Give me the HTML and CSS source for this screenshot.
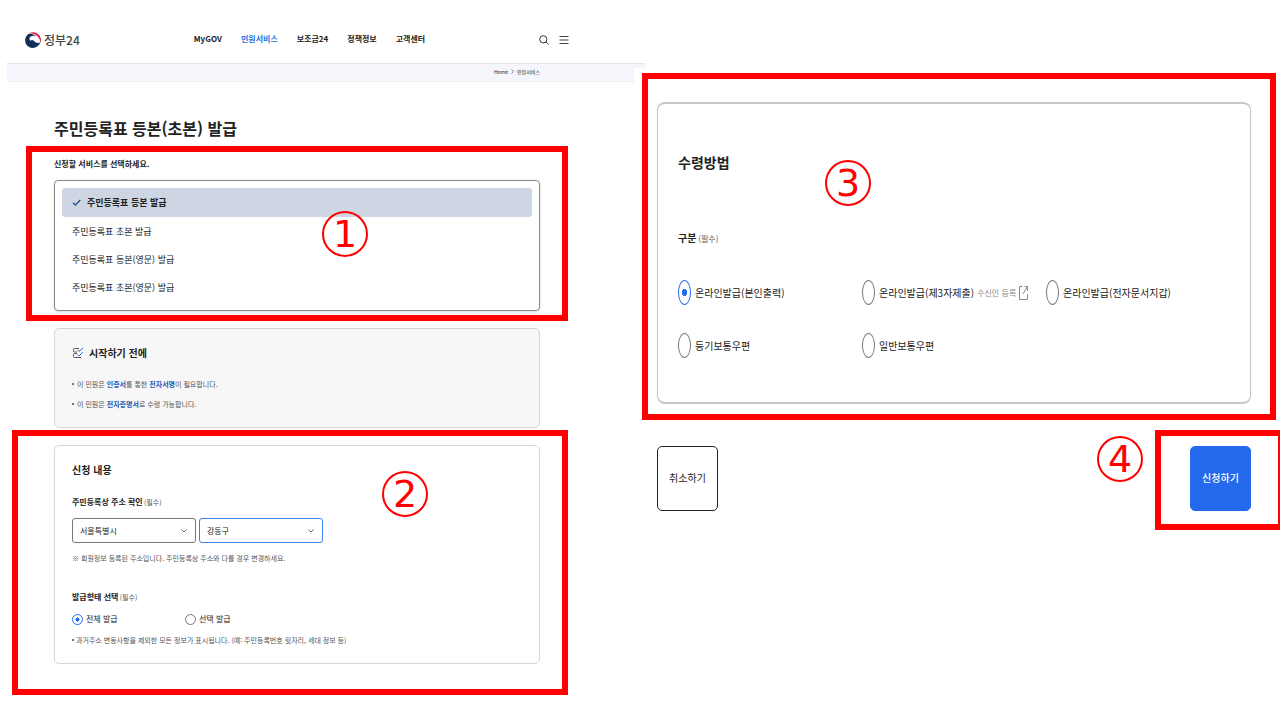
FILE: index.html
```html
<!DOCTYPE html>
<html lang="ko">
<head>
  <meta charset="UTF-8" />
  <meta name="viewport" content="width=device-width, initial-scale=1" />
  <title>정부24 주민등록표 등본(초본) 발급</title>
  <link rel="stylesheet" href="styles.css">
</head>
<body>
  <div class="guide">

    <div class="page">
      <header class="header">
        <a class="logo" href="#">
          <svg width="16" height="16" viewBox="0 0 48 48" aria-hidden="true">
            <path fill="#e5173f" d="M13 3C28-4 48 5 48 25c0 3-1 6-2 8C46 17 35 5 13 3z"/>
            <path fill="#0f2d56" d="M10 6C-4 17-2 38 12 45c13 7 30 0 34-15-5 5-13 4-18-2-4-5-10-5-12-1-5-6-3-13 5-15 5-1 9 0 13 2C28 7 18 4 10 6z"/>
          </svg>
          <span>정부24</span>
        </a>
        <nav class="nav">
          <a href="#">MyGOV</a>
          <a href="#" class="active">민원서비스</a>
          <a href="#">보조금24</a>
          <a href="#">정책정보</a>
          <a href="#">고객센터</a>
        </nav>
        <div class="tools">
          <button type="button" aria-label="검색">
            <svg width="10" height="10" viewBox="0 0 10 10" fill="none" stroke="#333"><circle cx="4.3" cy="4.3" r="3.6"/><path d="M7 7l2.5 2.5"/></svg>
          </button>
          <button type="button" aria-label="메뉴">
            <svg width="10" height="10" viewBox="0 0 10 10" fill="none" stroke="#444"><path d="M.5 1.500h9M.5 5h9M.5 8.500h9"/></svg>
          </button>
        </div>
      </header>

      <div class="breadcrumb">
        <a href="#">Home</a>
        <svg width="3" height="5" viewBox="0 0 3 5" fill="none" stroke="#555" stroke-width=".7"><path d="M.5.5l2 2-2 2"/></svg>
        <a href="#">민원서비스</a>
      </div>

      <main class="content">
        <h1>주민등록표 등본(초본) 발급</h1>

        <section class="service">
          <h2 class="label">신청할 서비스를 선택하세요.</h2>
          <ul class="service-list">
            <li><button type="button" class="selected">
              <svg width="9" height="9" viewBox="0 0 9 9" fill="none" stroke="#1d4a8f" stroke-width="1.3"><path d="M1 4.8l2.4 2.3L8.2 2"/></svg>
              주민등록표 등본 발급</button></li>
            <li><button type="button">주민등록표 초본 발급</button></li>
            <li><button type="button">주민등록표 등본(영문) 발급</button></li>
            <li><button type="button">주민등록표 초본(영문) 발급</button></li>
          </ul>
          <div class="frame frame-1"></div>
          <span class="step step-1">1</span>
        </section>

        <section class="card notice">
          <h2>
            <svg width="12" height="12" viewBox="0 0 12 12" fill="none" stroke="#555">
              <path d="M7 1.500H2.500a1 1 0 0 0-1 1v1.500a1 1 0 0 0 1 1H5M5 6.500H2.500a1 1 0 0 0-1 1v2a1 1 0 0 0 1 1H9"/>
              <path stroke="#2f6bd8" d="M5.500 3l1.500 1.500L11 1M5.500 7.500L7 9l4-4"/>
            </svg>
            시작하기 전에
          </h2>
          <ul>
            <li>이 민원은 <b>인증서</b>를 통한 <b>전자서명</b>이 필요합니다.</li>
            <li>이 민원은 <b>전자증명서</b>로 수령 가능합니다.</li>
          </ul>
        </section>

        <section class="apply">
          <form class="card">
            <h2>신청 내용</h2>
            <h3 class="label">주민등록상 주소 확인 <small>(필수)</small></h3>
            <div class="selects">
              <div class="select">
                <select aria-label="시도"><option>서울특별시</option></select>
                <svg width="6" height="4" viewBox="0 0 6 4" fill="none" stroke="#666"><path d="M.5.5L3 3 5.500.5"/></svg>
              </div>
              <div class="select focus">
                <select aria-label="시군구"><option>강동구</option></select>
                <svg width="6" height="4" viewBox="0 0 6 4" fill="none" stroke="#666"><path d="M.5.5L3 3 5.500.5"/></svg>
              </div>
            </div>
            <p class="note">※ 회원정보 등록된 주소입니다. 주민등록상 주소와 다를 경우 변경하세요.</p>
            <h3 class="label type">발급형태 선택 <small>(필수)</small></h3>
            <div class="radios">
              <label><input type="radio" name="type" checked>전체 발급</label>
              <label><input type="radio" name="type">선택 발급</label>
            </div>
            <p class="note dot">과거주소 변동사항을 제외한 모든 정보가 표시됩니다. (예: 주민등록번호 뒷자리, 세대 정보 등)</p>
          </form>
          <div class="frame frame-2"></div>
          <span class="step step-2">2</span>
        </section>
      </main>
    </div>

    <div class="receive">
      <section class="method">
        <form class="method-card">
          <h2>수령방법</h2>
          <h3>구분 <small>(필수)</small></h3>
          <div class="method-options">
            <label><input type="radio" name="method" checked>온라인발급(본인출력)</label>
            <div class="option">
              <label><input type="radio" name="method">온라인발급(제3자제출)</label>
              <a href="#">수신인 등록
                <svg width="9" height="16" viewBox="0 0 9 16" fill="none" stroke="#888"><path d="M3.500 1.500H.5v13h8V9M5.500 1.500h3V6M8.500 1.500L4 9"/></svg>
              </a>
            </div>
            <label><input type="radio" name="method">온라인발급(전자문서지갑)</label>
            <label><input type="radio" name="method">등기보통우편</label>
            <label><input type="radio" name="method">일반보통우편</label>
          </div>
        </form>
        <div class="frame frame-3"></div>
        <span class="step step-3">3</span>
      </section>

      <div class="actions">
        <button type="button" class="cancel">취소하기</button>
        <div class="submit-area">
          <button type="button" class="submit">신청하기</button>
          <div class="frame frame-4"></div>
          <span class="step step-4">4</span>
        </div>
      </div>
    </div>

  </div>
</body>
</html>
```

FILE: styles.css
```css
* {
  box-sizing: border-box;
}
body {
  margin: 0;
  background: #fff;
  color: #222;
  font-family: "Noto Sans CJK KR", sans-serif;
  font-size: 8px;
  line-height: 12px;
  overflow-x: hidden;
}
h1, h2, h3, p, ul {
  margin: 0;
  padding: 0;
}
ul {
  list-style: none;
}
a {
  color: inherit;
  text-decoration: none;
}
button, select {
  font-family: inherit;
  color: inherit;
}
svg {
  display: block;
  flex: none;
}
.guide {
  display: grid;
  grid-template-columns: 645fr 635fr;
  align-items: start;
}

/* left: application page */
.page {
  padding-left: 7px;
}
.header {
  display: flex;
  align-items: center;
  padding: 16px 76px 0 18px;
  height: 64px;
  border-bottom: 1px solid #e1e4ec;
}
.logo {
  display: flex;
  align-items: center;
  gap: 3px;
  font-size: 12px;
  line-height: 16px;
  font-weight: 500;
  color: #444;
}
.nav {
  display: flex;
  gap: 19px;
  margin-left: 114px;
  padding-bottom: 2px;
  font-weight: 700;
}
.nav .active {
  color: #1a76e8;
}
.tools {
  display: flex;
  gap: 10px;
  margin-left: auto;
}
.tools button {
  padding: 0;
  border: 0;
  background: none;
}
.breadcrumb {
  display: flex;
  align-items: center;
  justify-content: flex-end;
  gap: 3px;
  height: 18px;
  padding: 0 105px 2px 0;
  background: #f5f6fb;
  border-bottom: 1px solid #eeeff2;
  font-size: 5px;
}
.content {
  padding: 34px 105px 49px 47px;
}
h1 {
  font-size: 16px;
  line-height: 24px;
  margin-bottom: 18px;
}
.label {
  font-size: 8px;
  line-height: 12px;
}
.service, .apply, .method, .submit-area {
  position: relative;
}
.service-list {
  margin-top: 10px;
  padding: 7px 7px 9px;
  border: 1px solid #888;
  border-radius: 4px;
  box-shadow: 0 1px 3px rgba(0, 0, 0, 0.15);
}
.service-list button {
  display: flex;
  align-items: center;
  gap: 6px;
  width: 100%;
  height: 28px;
  padding: 0 10px;
  border: 0;
  border-radius: 3px;
  background: none;
  font-size: 9px;
}
.service-list .selected {
  height: 29px;
  background: #cdd6e2;
  font-weight: 700;
}
.card {
  padding: 16px 17px 17px;
  border: 1px solid #d6d6d6;
  border-radius: 5px;
}
.card h2 {
  display: flex;
  align-items: center;
  gap: 5px;
  font-size: 10px;
  line-height: 16px;
}
.notice {
  margin: 17px 0;
  background: #f7f7f7;
}
.notice ul {
  display: grid;
  gap: 8px;
  margin-top: 17px;
  font-size: 7px;
  color: #555;
}
.notice li, .dot {
  display: flex;
  align-items: center;
  white-space: pre;
}
.notice li::before, .dot::before {
  content: "";
  width: 2px;
  height: 2px;
  margin-right: 3px;
  border-radius: 50%;
  background: #444;
}
.dot::before {
  margin-right: 2px;
}
.notice b {
  color: #1f57b8;
}
.apply .label {
  margin-top: 18px;
}
.apply .type {
  margin-top: 27px;
}
small {
  font-size: 7px;
  font-weight: 400;
  color: #555;
  margin-left: -1px;
}
.selects {
  display: flex;
  gap: 3px;
  margin-top: 10px;
}
.select {
  position: relative;
  width: 124px;
}
.select select {
  appearance: none;
  display: block;
  width: 100%;
  height: 25px;
  padding: 0 7px;
  border: 1px solid #777;
  border-radius: 3px;
  background: #fff;
  font-size: 8px;
}
.select.focus select {
  border-color: #3d7ff0;
}
.select svg {
  position: absolute;
  right: 9px;
  top: 11px;
  pointer-events: none;
}
.note {
  margin-top: 9px;
  font-size: 7px;
  color: #555;
}
.radios {
  display: grid;
  grid-template-columns: 113px 113px;
  margin-top: 10px;
}
label {
  display: flex;
  align-items: center;
  gap: 3px;
}
input[type="radio"] {
  appearance: none;
  flex: none;
  width: 11px;
  height: 11px;
  margin: 0;
  border: 1px solid #777;
  border-radius: 50%;
}
input[type="radio"]:checked {
  border-color: #256aec;
  background: radial-gradient(closest-side, #256aec 40%, #fff 50%);
}

/* right: receiving method and buttons */
.receive {
  position: relative;
  margin: 68px 0 0 -11px;
  padding: 34px 29px 0 23px;
  background: #fff;
}
.method-card {
  padding: 46px 20px 44px;
  border: 1px solid #c6c6c6;
  border-width: 2px 1px;
  border-radius: 8px;
}
.method-card h2 {
  font-size: 14px;
  line-height: 24px;
}
.method-card h3 {
  margin-top: 54px;
  font-size: 10px;
  line-height: 20px;
}
.method-card small {
  font-size: 8px;
}
.method-options {
  display: grid;
  grid-template-columns: repeat(3, 1fr);
  gap: 28px 0;
  margin-top: 31px;
  font-size: 10px;
  white-space: nowrap;
}
.method-options input[type="radio"] {
  width: 13px;
  height: 25px;
}
.method-options input[type="radio"]:checked {
  background: radial-gradient(3px 4px, #256aec 80%, #fff 100%);
}
.method-options label {
  gap: 4px;
}
.option, .option a {
  display: flex;
  align-items: center;
  gap: 3px;
}
.option a {
  font-size: 8px;
  color: #888;
}
.actions {
  display: flex;
  justify-content: space-between;
  margin-top: 42px;
}
.actions button {
  display: block;
  width: 61px;
  height: 65px;
  padding: 0 0 2px;
  border: 1px solid #222;
  border-radius: 5px;
  background: #fff;
  font-size: 10px;
}
.actions .submit {
  border-color: #256aec;
  background: #256aec;
  color: #fff;
  font-weight: 500;
}

/* red guide frames and step numbers */
.frame {
  position: absolute;
  border: 6px solid #f00;
  pointer-events: none;
}
.frame-1 {
  inset: -12px -28px -10px;
}
.frame-2 {
  inset: -15px -28px -31px -42px;
}
.frame-3 {
  inset: -29px -25px -16px -15px;
}
.frame-4 {
  inset: -16px -33px -19px -35px;
}
.step {
  position: absolute;
  width: 46px;
  height: 46px;
  border: 2px solid #f00;
  border-radius: 50%;
  color: #f00;
  font-family: "DejaVu Sans", sans-serif;
  font-size: 38px;
  line-height: 42px;
  text-align: center;
}
.step-1 {
  top: 53px;
  right: 172px;
}
.step-2 {
  top: 26px;
  right: 112px;
}
.step-3 {
  top: 58px;
  left: 168px;
}
.step-4 {
  top: -10px;
  left: -93px;
}
```
